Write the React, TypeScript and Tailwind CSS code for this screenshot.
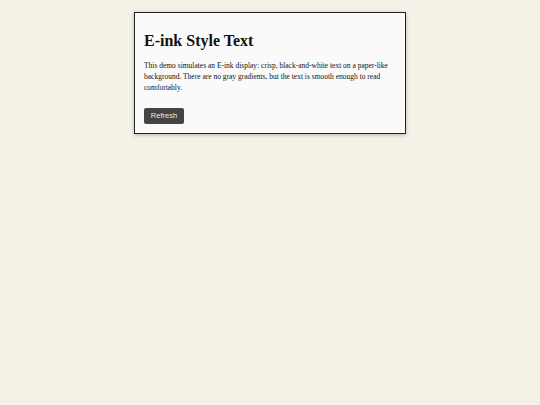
export default function App() {
	return (
		<div className="min-h-screen w-full bg-[#f4f1e6] pt-3">
			<div
				className="mx-auto w-[272px] border border-[#222] bg-[#fafafa] px-[9px] pt-[18px] pb-[8px] shadow-[0_1px_4px_rgba(0,0,0,0.25)]"
				style={{ fontFamily: "'Liberation Serif', 'Times New Roman', serif" }}
			>
				<h1 className="text-[16px] font-bold leading-[20px] text-[#111]">E-ink Style Text</h1>
				<p className="mt-[9px] text-[7.5px] leading-[11px] text-[#111]">
					This demo simulates an E-ink display: crisp, black-and-white text on a paper-like background.
					There are no gray gradients, but the text is smooth enough to read comfortably.
				</p>
				<button
					type="button"
					className="mt-[15px] h-4 w-10 rounded-[2px] bg-[#444] text-[7.5px] text-[#e8e8e8]"
					style={{ fontFamily: "'Liberation Sans', Arial, sans-serif" }}
				>
					Refresh
				</button>
			</div>
		</div>
	);
}
